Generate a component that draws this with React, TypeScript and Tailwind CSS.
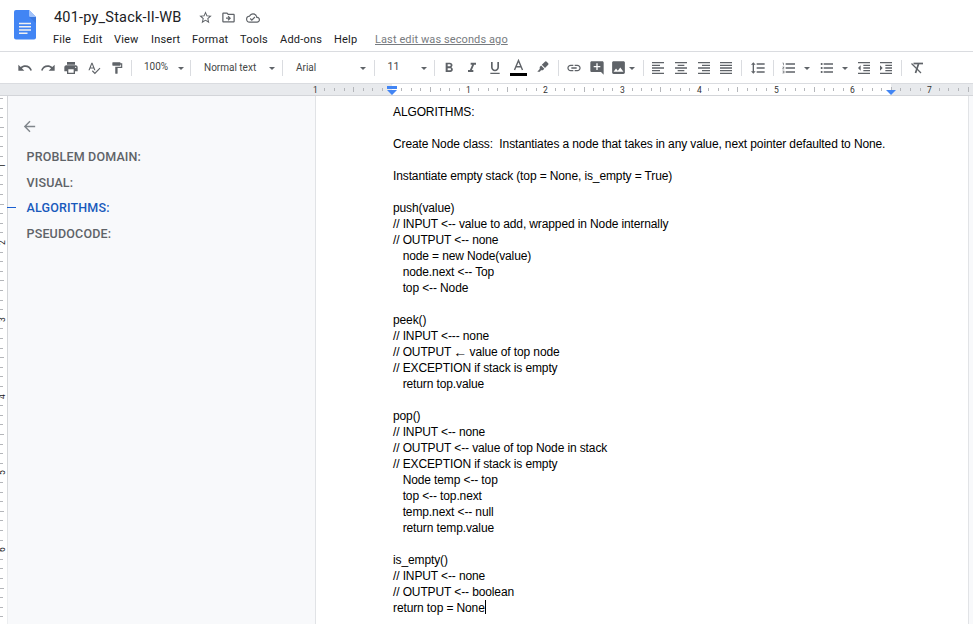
import type { ReactNode } from "react";
import type { IconType } from "react-icons";
import {
  MdAddComment,
  MdArrowBack,
  MdFormatAlignCenter,
  MdFormatAlignJustify,
  MdFormatAlignLeft,
  MdFormatAlignRight,
  MdFormatBold,
  MdFormatIndentDecrease,
  MdFormatIndentIncrease,
  MdFormatItalic,
  MdFormatLineSpacing,
  MdFormatListBulleted,
  MdFormatListNumbered,
  MdFormatPaint,
  MdFormatUnderlined,
  MdImage,
  MdLink,
  MdOutlineCloudDone,
  MdOutlineDriveFileMove,
  MdPrint,
  MdRedo,
  MdSpellcheck,
  MdStarBorder,
  MdUndo,
} from "react-icons/md";

const INCH = 76.8;

const menus = [
  { label: "File", box: "w-[30px]" },
  { label: "Edit", box: "w-[31px]" },
  { label: "View", box: "w-[37px]" },
  { label: "Insert", box: "w-[41px]" },
  { label: "Format", box: "w-[48px]" },
  { label: "Tools", box: "w-[40px]" },
  { label: "Add-ons", box: "w-[54px]" },
  { label: "Help", box: "w-[41px]" },
];

const outline = ["PROBLEM DOMAIN:", "VISUAL:", "ALGORITHMS:", "PSEUDOCODE:"];

const lines = [
  "ALGORITHMS:",
  "",
  "Create Node class:  Instantiates a node that takes in any value, next pointer defaulted to None.",
  "",
  "Instantiate empty stack (top = None, is_empty = True)",
  "",
  "push(value)",
  "// INPUT <-- value to add, wrapped in Node internally",
  "// OUTPUT <-- none",
  "   node = new Node(value)",
  "   node.next <-- Top",
  "   top <-- Node",
  "",
  "peek()",
  "// INPUT <--- none",
  "// OUTPUT ← value of top node",
  "// EXCEPTION if stack is empty",
  "   return top.value",
  "",
  "pop()",
  "// INPUT <-- none",
  "// OUTPUT <-- value of top Node in stack",
  "// EXCEPTION if stack is empty",
  "   Node temp <-- top",
  "   top <-- top.next",
  "   temp.next <-- null",
  "   return temp.value",
  "",
  "is_empty()",
  "// INPUT <-- none",
  "// OUTPUT <-- boolean",
  "return top = None",
];

function Cell({ box, children }: { box: string; children: ReactNode }) {
  return <div className={`flex h-full shrink-0 items-center justify-center ${box}`}>{children}</div>;
}

function Tool({ icon: Icon, box, size = 16 }: { icon: IconType; box: string; size?: number }) {
  return (
    <Cell box={box}>
      <Icon size={size} className="shrink-0" />
    </Cell>
  );
}

function Caret({ box }: { box: string }) {
  return (
    <Cell box={box}>
      <svg width="6" height="3" viewBox="0 0 6 3" className="mt-px shrink-0">
        <path d="M0 0h6L3 3z" fill="currentColor" />
      </svg>
    </Cell>
  );
}

function Sep({ box = "" }: { box?: string }) {
  return <div className={`h-4 w-px shrink-0 bg-[#dadce0] ${box}`} />;
}

function Label({ box, children }: { box: string; children: ReactNode }) {
  return <div className={`shrink-0 whitespace-nowrap leading-4 text-[#444746] ${box}`}>{children}</div>;
}

function DocsLogo() {
  return (
    <svg width="22" height="30" viewBox="0 0 22 30" className="shrink-0">
      <path d="M2 0h13l7 7v20.500a2 2 0 0 1-2 2H2a2 2 0 0 1-2-2V2a2 2 0 0 1 2-2z" fill="#4285f4" />
      <path d="M15 7h7v6z" fill="#3a78e0" />
      <path d="M15 0l7 7h-5.500a1.500 1.500 0 0 1-1.500-1.500z" fill="#a1c2fa" />
      <path d="M5 13.500h12M5 16.800h12M5 20h12M5 23.300h8.500" stroke="#f1f1f1" strokeWidth="1.500" />
    </svg>
  );
}

function Ruler() {
  const marks = Array.from({ length: 69 }, (_, i) => i - 8);
  return (
    <svg width="973" height="11" className="block" shapeRendering="crispEdges">
      <rect width="973" height="11" fill="#e8eaed" />
      <rect x="392" width="499" height="11" fill="#fff" />
      {marks.map((m) => {
        const x = Math.floor(392 + (m * INCH) / 8);
        if (m === 0) return null;
        if (m % 8 === 0)
          return (
            <text key={m} x={x + 0.5} y="8.500" textAnchor="middle" fontSize="8.500" fill="#333" className="font-[Roboto,sans-serif]">
              {Math.abs(m / 8)}
            </text>
          );
        const mid = m % 4 === 0;
        return <rect key={m} x={x} y={mid ? 3 : 4} width="1" height={mid ? 5 : 3} fill="#b4b6ba" />;
      })}
      <path d="M387 2h10v3h-10zM387 6h10l-5 5z" fill="#4285f4" shapeRendering="auto" />
      <path d="M886 6h10l-5 5z" fill="#4285f4" shapeRendering="auto" />
    </svg>
  );
}

function SideRuler() {
  const marks = Array.from({ length: 56 }, (_, i) => i + 1);
  return (
    <svg width="7" height="528" className="block shrink-0 bg-white" shapeRendering="crispEdges">
      {marks.map((m) => {
        const y = Math.floor(88.9 + (m * INCH) / 8) - 96;
        if (m % 8 === 0)
          return (
            <text
              key={m}
              x="0"
              y="0"
              transform={`translate(5 ${y + 0.5}) rotate(-90)`}
              textAnchor="middle"
              fontSize="8.500"
              fill="#222"
              className="font-[Roboto,sans-serif]"
            >
              {m / 8}
            </text>
          );
        return <rect key={m} x="0" y={y} width={m % 4 === 0 ? 4 : 3} height="1" fill="#b4b6ba" />;
      })}
    </svg>
  );
}

function Line({ text }: { text: string }) {
  const [before, after] = text.split("←");
  if (after === undefined) return <>{text}</>;
  return (
    <>
      {before}
      <span className="flex w-3 justify-center text-[14px]">←</span>
      {after}
    </>
  );
}

export default function App() {
  return (
    <div className="flex h-[624px] w-[973px] flex-col overflow-hidden bg-white font-[Roboto,sans-serif] text-[#5f6368]">
      <header className="flex h-[52px] shrink-0 border-b border-[#dadce0] pl-[14px]">
        <div className="pt-[10px]">
          <DocsLogo />
        </div>
        <div className="flex flex-col pl-[17px]">
          <div className="flex h-[30px] items-center pt-[5px]">
            <h1 className="w-[143px] whitespace-nowrap pl-px text-[14.5px] leading-5 tracking-[0.2px] text-[#202124]">
              401-py_Stack-II-WB
            </h1>
            <Tool icon={MdStarBorder} box="w-[18px]" size={15} />
            <Tool icon={MdOutlineDriveFileMove} box="ml-1 w-5" size={15} />
            <Tool icon={MdOutlineCloudDone} box="ml-1 w-[22px]" size={14} />
          </div>
          <nav className="flex h-5 items-center whitespace-nowrap text-[11px] leading-4 tracking-[0.2px] text-[#202124]">
            {menus.map((m) => (
              <span key={m.label} className={`shrink-0 ${m.box}`}>
                {m.label}
              </span>
            ))}
            <span className="tracking-[0.1px] text-[#777b80] underline">Last edit was seconds ago</span>
          </nav>
        </div>
      </header>

      <div className="flex h-8 shrink-0 items-center border-b border-[#dadce0] pl-[14px]">
        <Tool icon={MdUndo} box="w-[22px]" />
        <Tool icon={MdRedo} box="w-6" />
        <Tool icon={MdPrint} box="w-[21px]" />
        <Tool icon={MdSpellcheck} box="w-[26px]" size={14} />
        <Tool icon={MdFormatPaint} box="w-5" size={14} />
        <Sep box="ml-1" />
        <Label box="w-[41px] pl-3 pb-0.5 text-[10px]">100%</Label>
        <Caret box="w-[15px]" />
        <Sep box="ml-0.5" />
        <Label box="w-[73px] pl-[13px] text-[10px]">Normal text</Label>
        <Caret box="w-[15px]" />
        <Sep box="ml-[3px]" />
        <Label box="w-[72px] pl-[13px] text-[10px]">Arial</Label>
        <Caret box="w-[15px]" />
        <Sep box="ml-1" />
        <Label box="w-[41px] pl-[12.500px] pb-0.5 text-[10.500px]">11</Label>
        <Caret box="w-[15px]" />
        <Sep box="ml-[3px]" />
        <Tool icon={MdFormatBold} box="ml-[3px] w-[22px]" />
        <Tool icon={MdFormatItalic} box="w-6" />
        <Tool icon={MdFormatUnderlined} box="w-[22px]" />
        <Cell box="w-6">
          <svg width="17" height="17" viewBox="0 0 17 17" className="shrink-0">
            <path d="M4.500 11L8.500 1.500L12.500 11M6 7.800h5" fill="none" stroke="currentColor" strokeWidth="1.400" />
            <path d="M0 14h17v3H0z" fill="#000" />
          </svg>
        </Cell>
        <Cell box="w-[26px]">
          <svg width="12" height="12" viewBox="0 0 12 12" className="mb-0.5 shrink-0" fill="currentColor">
            <path d="M4.800 3.800L8.200 0.600Q9 0 9.700 0.700L11.200 2.200Q11.800 3 11.200 3.700L8 7zM4.100 4.500L7.300 7.700L5.800 9.200H4L2.800 10.800H0.300L2.700 8V6z" />
          </svg>
        </Cell>
        <Sep box="ml-0.5" />
        <Tool icon={MdLink} box="ml-1 w-[22px]" />
        <Tool icon={MdAddComment} box="w-[23px]" />
        <Tool icon={MdImage} box="w-[21px]" size={17} />
        <Caret box="w-1.5" />
        <Sep box="ml-2" />
        <Tool icon={MdFormatAlignLeft} box="ml-[3px] w-[22px]" />
        <Tool icon={MdFormatAlignCenter} box="w-6" />
        <Tool icon={MdFormatAlignRight} box="w-[22px]" />
        <Tool icon={MdFormatAlignJustify} box="w-[22px] mr-px" />
        <Sep box="ml-[3px]" />
        <Tool icon={MdFormatLineSpacing} box="w-[31px]" />
        <Sep />
        <Tool icon={MdFormatListNumbered} box="w-[30px]" />
        <Caret box="w-1.5" />
        <Tool icon={MdFormatListBulleted} box="ml-1.5 w-[22px]" />
        <Caret box="ml-1 w-1.5" />
        <Tool icon={MdFormatIndentDecrease} box="ml-1 w-[23px]" />
        <Tool icon={MdFormatIndentIncrease} box="w-[22px]" />
        <Sep box="ml-1" />
        <Cell box="w-[30px]">
          <svg width="12" height="12" viewBox="0 0 12 12" className="mt-px shrink-0" fill="none" stroke="currentColor">
            <path d="M2.500 1.500H12" strokeWidth="1.700" />
            <path d="M7.500 2L4.500 11" strokeWidth="1.700" />
            <path d="M0.500 1.500L10 11" strokeWidth="1.200" />
          </svg>
        </Cell>
      </div>

      <div className="h-3 shrink-0 border-b border-[#d3d5d9]">
        <Ruler />
      </div>

      <div className="flex min-h-0 flex-1">
        <SideRuler />
        <div className="w-px shrink-0 bg-linear-to-b from-[#d3d5d8] from-70% to-[#eceef0] to-95%" />
        <aside className="w-[307px] shrink-0 bg-[#f8f9fb] pt-[22px]">
          <div className="pl-[13px]">
            <MdArrowBack size={17} className="text-[#80868b]" />
          </div>
          <ul className="pt-[10px]">
            {outline.map((t) => (
              <li
                key={t}
                className={`flex h-[25.5px] items-center text-[12.5px] font-medium tracking-[0.17px] ${t === "ALGORITHMS:" ? "text-[#185abc]" : ""}`}
              >
                <span className={`-ml-px mb-[3px] h-px w-[9px] ${t === "ALGORITHMS:" ? "bg-[#1a5fd0]" : ""}`} />
                <span className="pl-[10.500px]">{t}</span>
              </li>
            ))}
          </ul>
        </aside>
        <main className="w-[654px] shrink-0 border-x border-[#e1e3e6] bg-white pl-[77px] pt-2 font-['Liberation_Sans',Arial,sans-serif] text-[12px] leading-4 tracking-[-0.118px] text-black">
          {lines.map((line, i) => (
            <p key={i} className="flex h-4 whitespace-pre">
              <Line text={line} />
              {i === lines.length - 1 && <span className="h-[14px] w-px bg-black" />}
            </p>
          ))}
        </main>
        <div className="flex-1 bg-[#f8f9fb]" />
      </div>
    </div>
  );
}
